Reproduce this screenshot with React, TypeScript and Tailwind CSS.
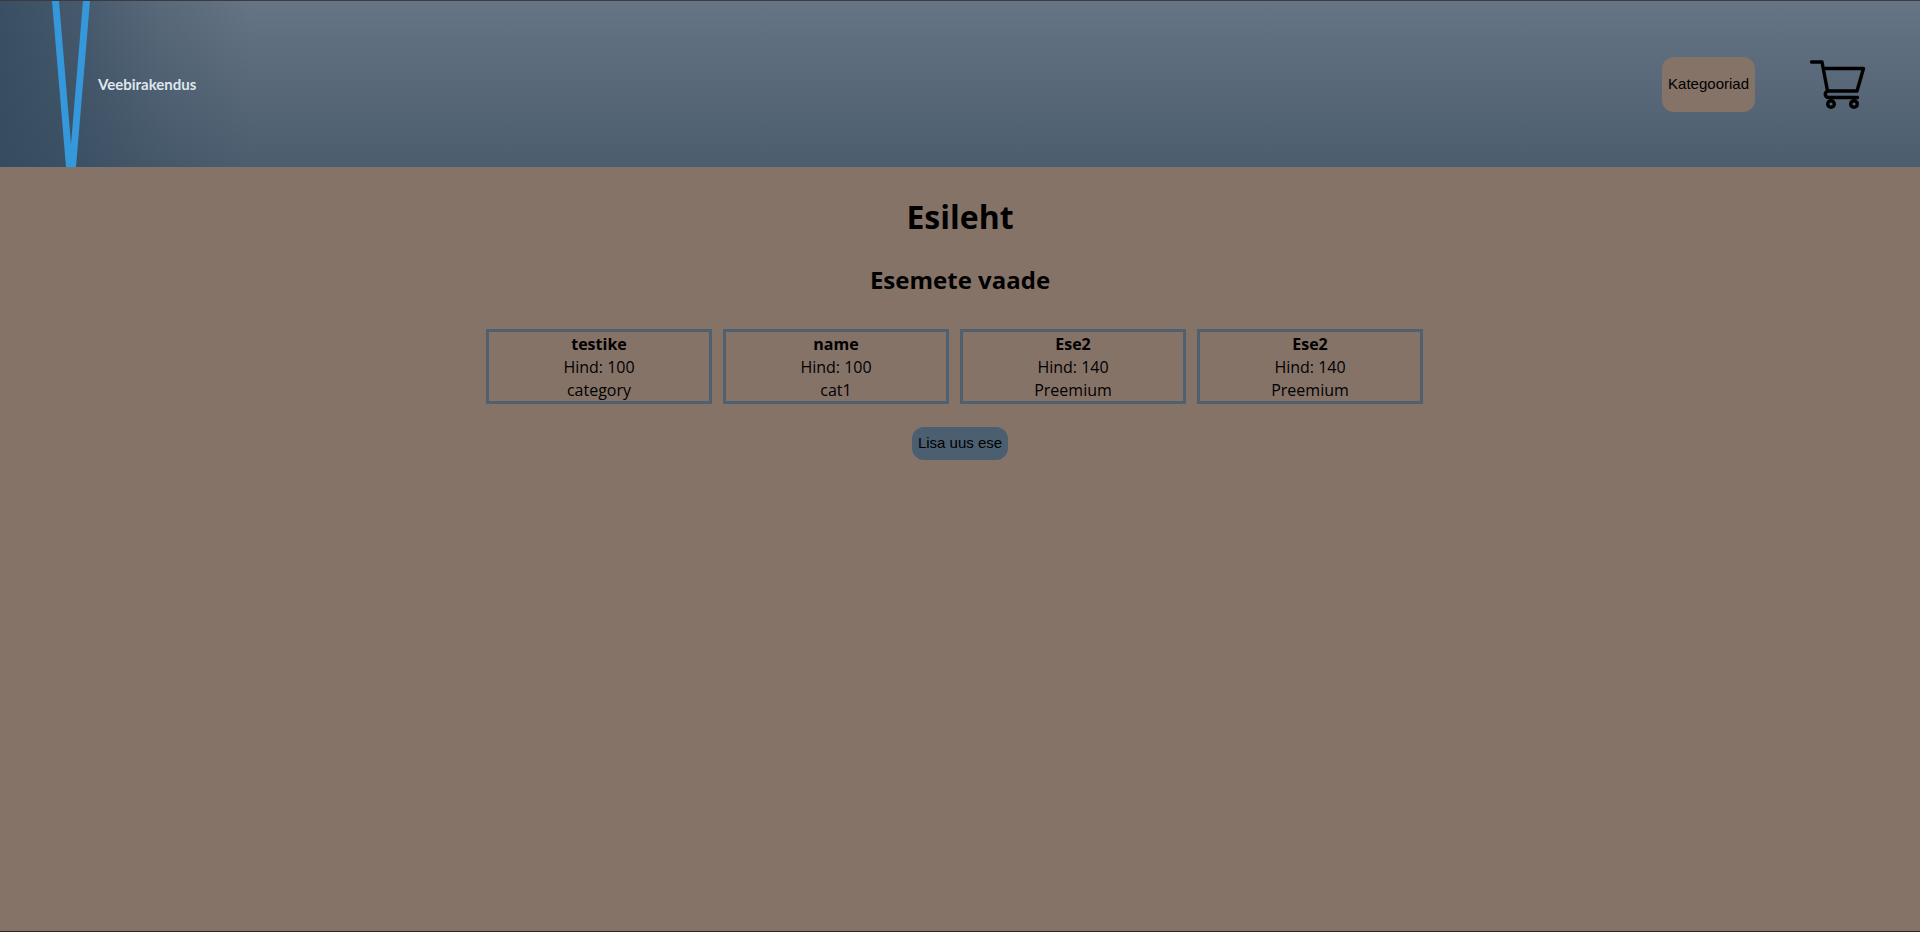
const items = [
  { name: 'testike', price: 100, category: 'category' },
  { name: 'name', price: 100, category: 'cat1' },
  { name: 'Ese2', price: 140, category: 'Preemium' },
  { name: 'Ese2', price: 140, category: 'Preemium' },
];

function Logo() {
  return (
    <a
      href="#"
      className="flex h-full w-[300px] items-center bg-[linear-gradient(to_right,#32485dd9_0px,#32485d99_80px,#32485d40_160px,#32485d00_250px)]"
    >
      <svg className="ml-[50px] h-full w-[42px] shrink-0" viewBox="0 0 42 166" preserveAspectRatio="none" aria-hidden="true">
        <path d="M2 0H9L21 143L33 0H40L26 166H16Z" fill="#3498db" />
      </svg>
      <span className="ml-[6px] font-[Lato,sans-serif] text-[15px] leading-5 font-bold text-[#dfe6ec]">Veebirakendus</span>
    </a>
  );
}

function CartIcon() {
  return (
    <svg className="h-[50px] w-[56px]" viewBox="0 0 56 50" fill="none" stroke="#000" strokeWidth="3.4" strokeLinecap="round" strokeLinejoin="round" aria-hidden="true">
      <path d="M1.6 3H12L17.5 32M13.5 9.5H53.5L47 32H19C14 32 14 38.5 19 38.5H47.5" />
      <circle cx="21" cy="45" r="3.3" />
      <circle cx="44" cy="45" r="3.3" />
    </svg>
  );
}

export default function App() {
  return (
    <div className="flex min-h-screen flex-col border-y border-t-[#3a3a42] border-b-[#2e2522] bg-[#867368] font-['Open_Sans',sans-serif] text-black">
      <header className="flex h-[166px] items-center justify-between bg-linear-to-b from-[#667484] to-[#4b5d6e]">
        <Logo />
        <nav className="flex items-center gap-[55px] pr-[54px]">
          <button className="h-[55px] rounded-[12px] bg-[#867368] px-[6px] font-['Liberation_Sans',sans-serif] text-[15px]">
            Kategooriad
          </button>
          <a href="#" aria-label="Ostukorv">
            <CartIcon />
          </a>
        </nav>
      </header>
      <main className="flex flex-col items-center">
        <h1 className="mt-[25px] text-[32px] leading-[50px] font-bold">Esileht</h1>
        <h2 className="mt-[19px] text-[24px] leading-[38px] font-bold">Esemete vaade</h2>
        <ul className="mt-[30px] grid w-1/2 auto-rows-[75px] grid-cols-4 gap-[11px] pr-[17px] pl-[6px] text-center text-[16px] leading-[23px]">
          {items.map((item, i) => (
            <li key={i} className="border-3 border-[#4f6070] pt-px">
              <p className="font-bold">{item.name}</p>
              <p>Hind: {item.price}</p>
              <p>{item.category}</p>
            </li>
          ))}
        </ul>
        <button className="mt-[23px] h-[33px] rounded-[12px] bg-[#4b5f71] px-[6px] font-['Liberation_Sans',sans-serif] text-[15px]">
          Lisa uus ese
        </button>
      </main>
    </div>
  );
}
